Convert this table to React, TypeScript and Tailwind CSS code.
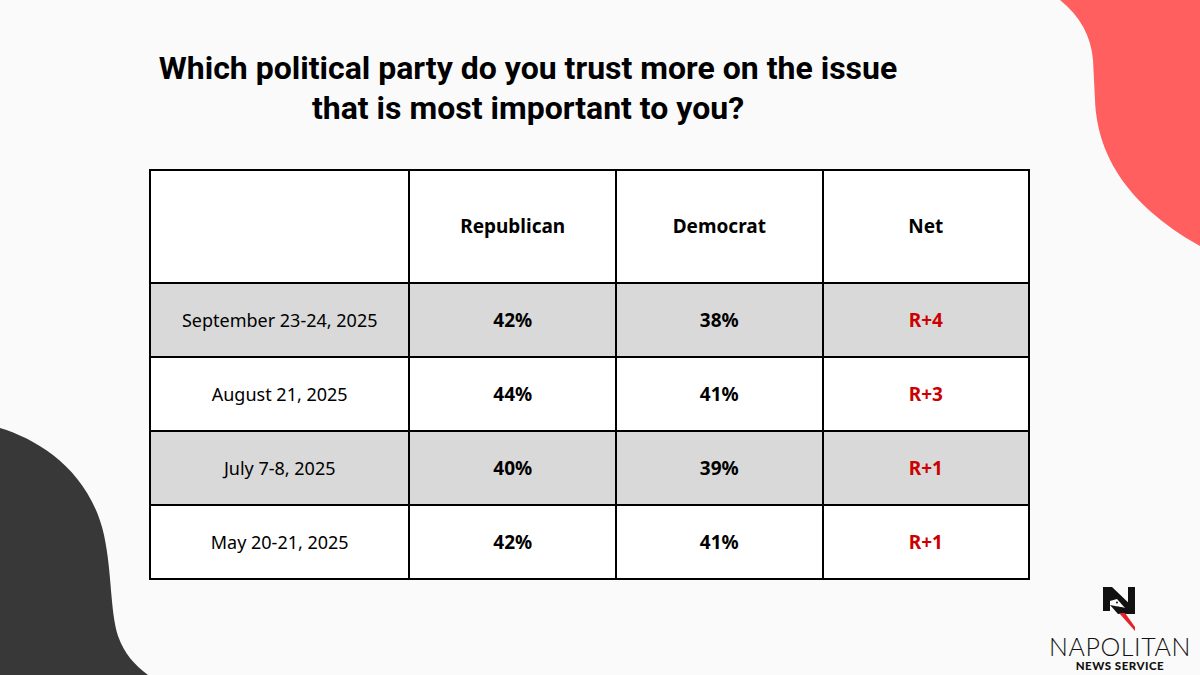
import React from "react";

const rows = [
  { date: "September 23-24, 2025", rep: "42%", dem: "38%", net: "R+4", shaded: true },
  { date: "August 21, 2025", rep: "44%", dem: "41%", net: "R+3", shaded: false },
  { date: "July 7-8, 2025", rep: "40%", dem: "39%", net: "R+1", shaded: true },
  { date: "May 20-21, 2025", rep: "42%", dem: "41%", net: "R+1", shaded: false },
];

function Blobs() {
  return (
    <svg className="absolute inset-0" width="1200" height="675" viewBox="0 0 1200 675">
      <path
        d="M1060 0 C1080 16 1091 36 1093 60 L1095 100 C1097 150 1122 202 1200 246 L1200 0 Z"
        fill="#ff5f5f"
      />
      <path
        d="M0 428 C40 440 90 472 104 535 C112 572 110 610 118 636 C125 655 134 664 148 675 L0 675 Z"
        fill="#383838"
      />
    </svg>
  );
}

function LogoMark() {
  return (
    <svg width="40" height="52" viewBox="0 0 40 52">
      {/* N */}
      <path d="M3 4 H10 V28 H3 Z" fill="#111" />
      <path d="M28 4 H35 V31 H28 Z" fill="#111" />
      <path d="M3 4 H12 L35 26 V31 H27 L3 12 Z" fill="#111" />
      {/* bird */}
      <path d="M10 18 L17 16 L25 25 L10 22 Z" fill="#fafafa" />
      <path d="M10 22 L25 25 L27 31 L18 31 Z" fill="#111" />
      <circle cx="17" cy="19.5" r="1" fill="#111" />
      {/* red wing */}
      <path d="M19 30 H25 L35 44 V48 Z" fill="#e0242a" />
    </svg>
  );
}

export default function App() {
  return (
    <div className="relative w-[1200px] h-[675px] overflow-hidden bg-[#fafafa]">
      <Blobs />
      <div className="relative flex flex-col">
        {/* Title */}
        <div className="w-[1056px] pt-[48px] text-center">
          <h1
            className="text-[32px] leading-[40px] font-bold text-black"
            style={{ fontFamily: "Roboto, 'Noto Sans', sans-serif" }}
          >
            Which political party do you trust more on the issue
            <br />
            that is most important to you?
          </h1>
        </div>

        {/* Table */}
        <div className="pl-[149px] pt-[41px]">
          <table
            className="border-collapse w-[881px] text-black"
            style={{ fontFamily: "'Noto Sans', 'Open Sans', sans-serif" }}
          >
            <thead>
              <tr className="h-[113px] bg-white">
                <th className="w-[260px] border-2 border-black"></th>
                <th className="w-[207px] border-2 border-black text-[19px] font-bold">Republican</th>
                <th className="w-[207px] border-2 border-black text-[19px] font-bold">Democrat</th>
                <th className="w-[207px] border-2 border-black text-[19px] font-bold">Net</th>
              </tr>
            </thead>
            <tbody>
              {rows.map((r) => (
                <tr key={r.date} className={`h-[74px] ${r.shaded ? "bg-[#d9d9d9]" : "bg-white"}`}>
                  <td className="border-2 border-black text-center text-[18px]">{r.date}</td>
                  <td className="border-2 border-black text-center text-[19px] font-bold">{r.rep}</td>
                  <td className="border-2 border-black text-center text-[19px] font-bold">{r.dem}</td>
                  <td className="border-2 border-black text-center text-[19px] font-bold text-[#cc0000]">
                    {r.net}
                  </td>
                </tr>
              ))}
            </tbody>
          </table>
        </div>

        {/* Logo */}
        <div className="flex justify-end pr-[9px] pt-[3px]">
          <div className="flex flex-col items-center" style={{ fontFamily: "Lato, 'Noto Sans', sans-serif" }}>
            <LogoMark />
            <div className="text-[25px] leading-[22px] font-light tracking-[0.6px] text-[#111]">
              NAPOLITAN
            </div>
            <div className="mt-[3px] text-[11.5px] leading-[12px] font-black tracking-[0.5px] text-[#111]">
              NEWS SERVICE
            </div>
          </div>
        </div>
      </div>
    </div>
  );
}
